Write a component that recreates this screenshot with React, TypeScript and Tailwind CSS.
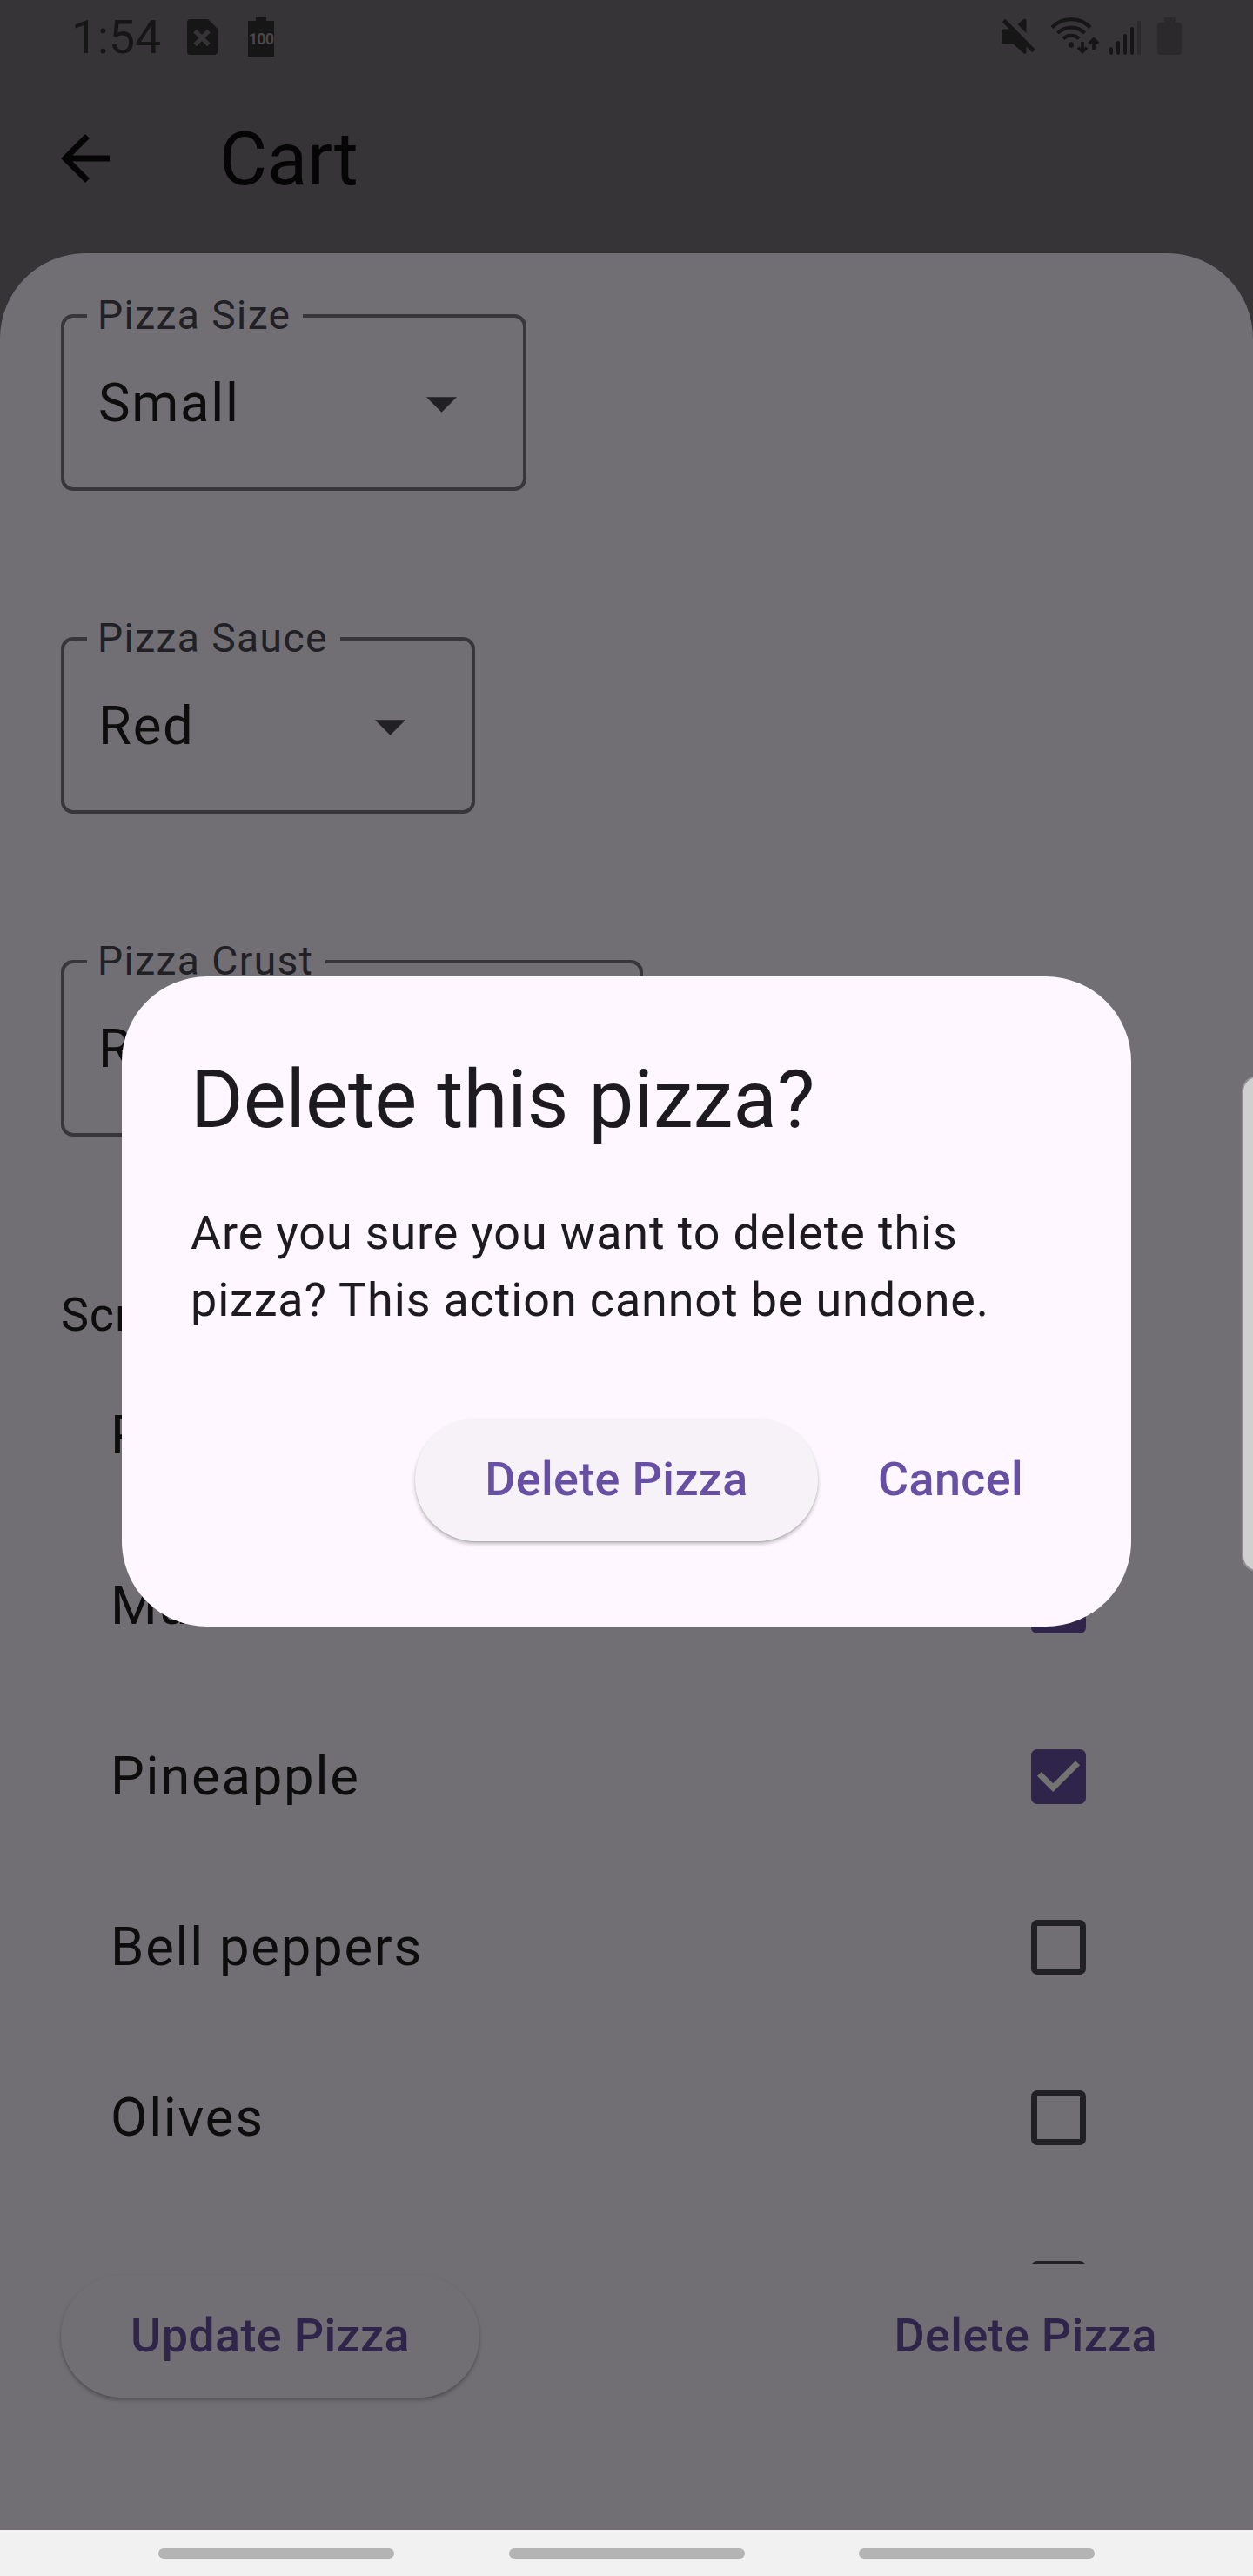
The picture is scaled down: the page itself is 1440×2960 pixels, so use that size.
import React from "react";

const TOPPINGS = [
  { name: "Pepperoni", checked: true },
  { name: "Mushrooms", checked: true },
  { name: "Pineapple", checked: true },
  { name: "Bell peppers", checked: false },
  { name: "Olives", checked: false },
  { name: "Onions", checked: false },
];

function SimCardIcon() {
  return (
    <svg className="block h-[41px] w-[35px]" viewBox="0 0 35 41" fill="none">
      <path d="M4 0H24L35 11V37a4 4 0 0 1-4 4H4a4 4 0 0 1-4-4V4a4 4 0 0 1 4-4Z" fill="#161616" />
      <path d="M9 13.5 25 29.5M25 13.5 9 29.5" stroke="#373437" strokeWidth="5" />
    </svg>
  );
}

function BatteryBadge() {
  return (
    <div className="flex w-[30px] flex-col items-center">
      <div className="h-1 w-3 bg-[#161616]" />
      <div className="flex h-[41px] w-full items-center justify-center bg-[#161616] text-[18px] font-bold tracking-[-0.8px] text-[#48464a]">
        100
      </div>
    </div>
  );
}

function MuteIcon() {
  return (
    <svg className="block h-[42px] w-[40px]" viewBox="0 0 40 42" fill="#161616">
      <path d="M3 12.5H11L28.5 30V38.5Q28.5 42 25.5 40.5L13.5 29.5H3Q0.5 29.5 .5 27V15Q.5 12.5 3 12.5Z" />
      <path d="M18.5 7 25.5 .8Q28.5 0 28.5 3.5V17Z" />
      <path d="M2.5 2.5 37 37.5" stroke="#161616" strokeWidth="5" />
    </svg>
  );
}

function WifiIcon() {
  return (
    <svg className="block h-[42px] w-[57px]" viewBox="0 0 57 42" fill="none" stroke="#161616" strokeWidth="4.2">
      <path d="M2 11.500C14-1 34-1 46 11.500" />
      <path d="M8.500 18C17 9.500 31 9.500 39.500 18" />
      <path d="M15 24.500C20 19.500 28 19.500 33 24.500" />
      <circle cx="24" cy="31.5" r="3.2" fill="#161616" stroke="none" />
      <path d="M37 28V38M32 34.500 37 39.500 42 34.500" strokeWidth="3.6" />
      <path d="M50 37V26M45 30 50 25 55 30" strokeWidth="3.6" />
    </svg>
  );
}

function SignalIcon() {
  return (
    <div className="flex h-[40px] items-end gap-1">
      <div className="h-[9px] w-1 rounded-full bg-[#161616]" />
      <div className="h-4 w-1 rounded-full bg-[#161616]" />
      <div className="h-6 w-1 rounded-full bg-[#161616]" />
      <div className="h-8 w-1 rounded-full bg-[#161616]" />
      <div className="h-[39px] w-1 rounded-full bg-[#2b292b]" />
    </div>
  );
}

function StatusBar() {
  return (
    <div className="flex h-[84px] items-start pl-[82px]">
      <div className="mt-[12px] w-[133px] text-[53.5px] leading-[62px] text-[#161616]">1:54</div>
      <div className="mt-[22px] mr-[35px]"><SimCardIcon /></div>
      <div className="mt-5"><BatteryBadge /></div>
      <div className="mt-[21px] mr-4 ml-auto"><MuteIcon /></div>
      <div className="mt-5 mr-[11px]"><WifiIcon /></div>
      <div className="mt-[23px] mr-[19px]"><SignalIcon /></div>
      <div className="mt-5 mr-[82px] flex w-7 flex-col items-center">
        <div className="h-[6px] w-[13px] rounded-t-[2px] bg-[#2b292b]" />
        <div className="h-[37px] w-full rounded-[3px] bg-[#2b292b]" />
      </div>
    </div>
  );
}

function AppBar() {
  return (
    <div className="flex h-[207px] items-start pl-14">
      <svg className="mt-14 block size-[84px]" viewBox="0 0 24 24" fill="#060506">
        <path d="M20 11H7.83l5.59-5.59L12 4l-8 8 8 8 1.41-1.41L7.83 13H20v-2Z" />
      </svg>
      <h1 className="mt-[50px] ml-[112px] text-[84.7px] leading-[99px] text-[#060506]">Cart</h1>
    </div>
  );
}

function SelectField({ label, value, box }: { label: string; value: string; box: string }) {
  return (
    <fieldset className={`m-0 mb-[144px] h-[227px] min-w-0 rounded-[14px] border-4 border-[#38363a] p-0 ${box}`}>
      <legend className="ml-[26px] h-[52px] pr-[14px] pl-[12px] text-[46.2px] leading-[50px] tracking-[1.4px] whitespace-nowrap text-[#212025]">
        {label}
      </legend>
      <div className="flex items-center justify-between pt-[38px] pr-[76px] pl-[39px]">
        <span className="text-[61.6px] leading-[72px] tracking-[1.75px] text-[#0d0d0e]">{value}</span>
        <svg className="mt-[3px] block h-[18px] w-[35px]" viewBox="0 0 35 17.5" fill="#212025">
          <path d="M0 0H35L17.5 17.5Z" />
        </svg>
      </div>
    </fieldset>
  );
}

function Checkbox({ checked }: { checked: boolean }) {
  if (!checked) {
    return <div className="size-[63px] rounded-[7px] border-[7px] border-[#212025]" />;
  }
  return (
    <div className="size-[63px] rounded-[7px] bg-[#2f254a]">
      <svg className="block size-full" viewBox="0 0 18 18" fill="none" stroke="#737472" strokeWidth="2">
        <path d="M2.700 8.100 7.200 12.600 15.300 4.500" />
      </svg>
    </div>
  );
}

function ToppingRow({ name, checked }: { name: string; checked: boolean }) {
  return (
    <li className="flex h-[196px] shrink-0 items-center justify-between pr-[122px] pl-[57px]">
      <span className="text-[61.6px] leading-[92px] tracking-[1.75px] text-[#0d0d0e]">{name}</span>
      <Checkbox checked={checked} />
    </li>
  );
}

function DeleteDialog() {
  return (
    <div className="absolute top-[1122px] left-[140px] flex h-[747px] w-[1160px] flex-col rounded-[98px] bg-[#fef7ff] pt-[84px] pr-[84px] pl-[79px] text-[#1d1b20]">
      <h2 className="text-[92.4px] leading-[115px]">Delete this pizza?</h2>
      <p className="mt-[57px] text-[53.9px] leading-[77px] tracking-[0.875px]">
        Are you sure you want to delete this
        <br />
        pizza? This action cannot be undone.
      </p>
      <div className="mt-[98px] flex items-center text-[53.9px] font-medium tracking-[0.35px] text-[#6750a4]">
        <button className="ml-[258px] flex h-[141px] w-[463px] items-center justify-center rounded-[70px] bg-[#f6f2f8] shadow-[0_3px_4px_rgba(0,0,0,0.26),0_1px_1px_rgba(0,0,0,0.08)]">
          Delete Pizza
        </button>
        <button className="ml-[69px] h-[141px]">Cancel</button>
      </div>
    </div>
  );
}

export default function App() {
  return (
    <div className="relative flex h-[2960px] w-[1440px] flex-col overflow-hidden bg-[#373437] font-['Roboto',sans-serif]">
      <StatusBar />
      <AppBar />
      <main className="flex h-[2616px] shrink-0 flex-col rounded-t-[98px] bg-[#716f74] px-[70px] pt-[46px]">
        <div className="flex h-[2264px] shrink-0 flex-col overflow-hidden">
          <SelectField label="Pizza Size" value="Small" box="w-[535px] shrink-0" />
          <SelectField label="Pizza Sauce" value="Red" box="w-[476px] shrink-0" />
          <SelectField label="Pizza Crust" value="Regular" box="w-[669px] shrink-0" />
          <p className="mt-[22px] h-[79px] shrink-0 text-[53.9px] leading-[77px] tracking-[0.875px] text-[#0d0d0e]">
            Scroll to see all toppings
          </p>
          <ul className="flex flex-col">
            {TOPPINGS.map((t) => (
              <ToppingRow key={t.name} name={t.name} checked={t.checked} />
            ))}
          </ul>
        </div>
        <div className="mt-[13px] flex h-[141px] items-center justify-between text-[53.9px] font-medium tracking-[0.35px] text-[#2f254a]">
          <button className="flex h-[141px] w-[481px] items-center justify-center rounded-[70px] bg-[#716f74] shadow-[0_3px_4px_rgba(0,0,0,0.26),0_1px_1px_rgba(0,0,0,0.08)]">
            Update Pizza
          </button>
          <button className="mr-[40px]">Delete Pizza</button>
        </div>
      </main>
      <nav className="flex h-[53px] shrink-0 items-start justify-center gap-[131.5px] bg-[#f1f1f1] pt-[21px]">
        <div className="h-3 w-[271px] rounded-full bg-[#b4b4b4]" />
        <div className="h-3 w-[271px] rounded-full bg-[#b4b4b4]" />
        <div className="h-3 w-[271px] rounded-full bg-[#b4b4b4]" />
      </nav>
      <DeleteDialog />
      <div className="absolute top-[1236px] -right-[7px] h-[570px] w-5 rounded-l-[18px] border-2 border-r-0 border-[#929094] bg-[#d0d0d0]" />
    </div>
  );
}
